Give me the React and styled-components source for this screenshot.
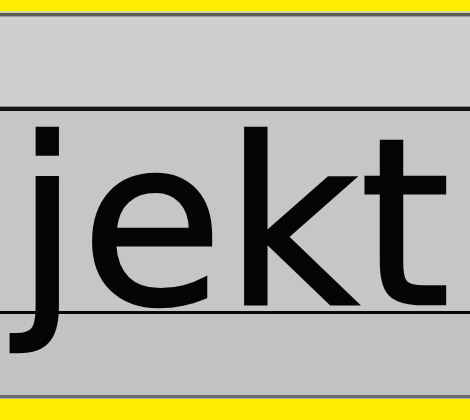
import React from "react";
import styled, { createGlobalStyle } from "styled-components";

const Global = createGlobalStyle`
  html, body { margin: 0; padding: 0; overflow: hidden; }
  body { width: 470px; height: 420px; background: #ffee00; font-family: "DejaVu Sans", sans-serif; }
`;

const Frame = styled.div`
  width: 470px;
  height: 420px;
  background: #ffee00;
  padding: 11px 0 21px;
  box-sizing: border-box;
  display: flex;
  flex-direction: column;
`;

const Window = styled.div`
  flex: 1;
  display: flex;
  flex-direction: column;
  border-top: 2px solid #d6d4a8;
  border-bottom: 1px solid #b4b29a;
  overflow: hidden;
`;

const TitleBar = styled.div`
  height: 90px;
  background: #cfcfcf;
  border-top: 3px solid #5a5a5a;
  box-shadow: inset 0 1px 0 #9a9a9a;
  border-bottom: 1px solid #8a8a8a;
  flex: none;
`;

const Body = styled.div`
  flex: 1;
  display: flex;
  flex-direction: column;
  background: #c4c4c4;
  border-top: 4px solid #141414;
  border-bottom: 3px solid #6a6a6a;
`;

const Field = styled.div`
  height: 200px;
  flex: none;
  background: #c6c6c6;
  border-bottom: 3px solid #080808;
  padding-left: 15px;
  overflow: visible;
  position: relative;
`;

const Label = styled.span`
  display: block;
  margin-top: -3px;
  font-family: "DejaVu Sans", sans-serif;
  font-size: 232px;
  line-height: 232px;
  letter-spacing: 1px;
  color: #050505;
  -webkit-text-stroke: 2.5px #050505;
  white-space: nowrap;
  position: relative;
  z-index: 1;
`;

const Rest = styled.div`
  flex: 1;
  background: #c3c3c3;
`;

export default function App() {
  return (
    <>
      <Global />
      <Frame>
        <Window>
          <TitleBar />
          <Body>
            <Field>
              <Label>jekt</Label>
            </Field>
            <Rest />
          </Body>
        </Window>
      </Frame>
    </>
  );
}
